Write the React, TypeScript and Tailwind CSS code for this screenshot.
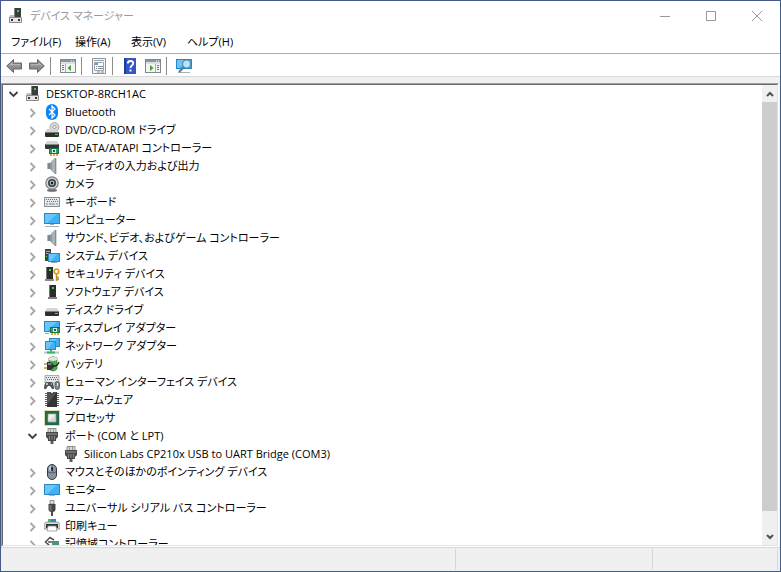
import type { ReactNode } from "react";

const Svg = ({ children, className = "h-4 w-4" }: { children: ReactNode; className?: string }) => (
  <svg viewBox="0 0 16 16" className={className + " shrink-0"} fill="none" aria-hidden="true">
    {children}
  </svg>
);

const Screen = ({ x, y, w, h }: { x: number; y: number; w: number; h: number }) => (
  <>
    <rect x={x} y={y} width={w} height={h} fill="#2f86bd" />
    <rect x={x + 1} y={y + 1} width={w - 2} height={h - 2} fill="#3fb2f5" />
    <path d={`M${x + 1} ${y + h - 1}V${y + 1}H${x + w - 3}L${x + 3} ${y + h - 1}Z`} fill="#67c6fb" />
  </>
);

const Speaker = () => (
  <Svg>
    <path d="M3 5h3v6H3z" fill="#7b868e" />
    <path d="M3 5h1v6H3z" fill="#b4bcc2" />
    <path d="M6 5l5-5v16l-5-5z" fill="#8d989f" />
    <path d="M8 3l3-3v16l-3-3z" fill="#a9b3b9" />
    <path d="M11 0h2v16h-2z" fill="#d3d8db" />
    <path d="M11.500 0v16" stroke="#6f7a81" strokeWidth=".8" />
  </Svg>
);

const Drive = ({ y = 8 }: { y?: number }) => (
  <>
    <path d={`M3 ${y - 2}h10l2 3H1z`} fill="#d5d5d5" />
    <rect x="1" y={y + 1} width="14" height="5" rx="1" fill="#2e2e2e" />
    <rect x="1" y={y + 1} width="14" height="1" fill="#7d7d7d" />
    <rect x="11" y={y + 3} width="3" height="1" fill="#4ee04e" />
  </>
);

const Plug = () => (
  <Svg>
    <path d="M4 .5h8V5H4z" fill="#d9d9d9" stroke="#777" strokeWidth=".8" />
    <path d="M6.500 1v3M9.500 1v3" stroke="#888" strokeWidth=".8" />
    <path d="M2 4h12v5l-2 2H4L2 9z" fill="#4a4a4a" />
    <path d="M3 5h10v2H3z" fill="#717171" />
    <path d="M4 11h8v2H4z" fill="#444" />
    <path d="M5.500 8v4M8 8v4M10.500 8v4" stroke="#999" strokeWidth=".8" />
    <path d="M6.500 13h3v3h-3z" fill="#5c5c5c" />
  </Svg>
);

const Chip = ({ x, y }: { x: number; y: number }) => (
  <>
    <rect x={x} y={y} width="10" height="6" fill="#17704a" />
    <rect x={x + 1} y={y + 1} width="8" height="4" fill="#2f9c68" />
    <rect x={x + 3} y={y + 1} width="4" height="4" fill="#d5e8dc" />
    <rect x={x + 4} y={y + 2} width="2" height="2" fill="#17604a" />
    <path d={`M${x + 1} ${y + 7}h8`} stroke="#e8a838" strokeWidth="2" strokeDasharray="2 1" />
  </>
);

const icons: Record<string, ReactNode> = {
  computer: (
    <Svg>
      <path d="M6 0h7v9H6z" fill="#3c3c3c" />
      <path d="M6 0h1v9H6z" fill="#858585" />
      <rect x="9" y="2" width="2" height="2" fill="#42d042" />
      <path d="M2 7h4v2h7l1 1H1z" fill="#bdbdbd" />
      <path d="M1.500 9.500h12v5h-12z" fill="#e6e6e6" stroke="#8b8b8b" />
      <path d="M3 11h2v2H3zM10 11h2v2h-2z" fill="#333" />
    </Svg>
  ),
  bluetooth: (
    <Svg>
      <rect x="2" width="12" height="16" rx="6" fill="#0a84f5" />
      <path d="M5 5l6 6-3 3V2l3 3-6 6" stroke="#fff" strokeWidth="1.200" />
    </Svg>
  ),
  dvd: (
    <Svg>
      <circle cx="10.500" cy="5" r="4.500" fill="#d9dcdc" stroke="#999" strokeWidth=".8" />
      <circle cx="10.500" cy="5" r="1.600" fill="#fff" stroke="#888" strokeWidth=".8" />
      <Drive y={9} />
    </Svg>
  ),
  ide: (
    <Svg>
      <path d="M3 1h10l2 3H1z" fill="#d5d5d5" />
      <rect x="1" y="4" width="14" height="5" rx="1" fill="#333" />
      <path d="M2 4h12v1H2z" fill="#888" />
      <Chip x={5} y={8} />
    </Svg>
  ),
  speaker: <Speaker />,
  camera: (
    <Svg>
      <ellipse cx="8" cy="14.400" rx="5" ry="1.400" fill="#6e6e6e" />
      <circle cx="8" cy="7" r="6.200" fill="#d2d5d7" stroke="#7c7f82" strokeWidth="1.200" />
      <circle cx="8" cy="7" r="4" fill="#3a4045" />
      <circle cx="8" cy="7" r="2.400" fill="#a9bac4" />
      <circle cx="8" cy="7" r="1.200" fill="#15191c" />
    </Svg>
  ),
  keyboard: (
    <Svg>
      <rect x="0.500" y="3.500" width="15" height="9" fill="#e3e7ea" stroke="#8a9299" />
      <path d="M2 5.500h12M3 7.500h11" stroke="#68717a" strokeDasharray="1 1" />
      <path d="M2 10h2M5 10h6M12 10h2" stroke="#7c858d" />
    </Svg>
  ),
  monitor: (
    <Svg>
      <Screen x={0} y={1} w={16} h={11} />
      <path d="M6 12h4v1H6z" fill="#9aa7b0" />
      <path d="M1 14.500h14" stroke="#9eb1bd" />
    </Svg>
  ),
  display: (
    <Svg>
      <Screen x={0} y={2} w={16} h={11} />
      <path d="M5 13.500h6" stroke="#a9b8c2" />
    </Svg>
  ),
  system: (
    <Svg>
      <rect x="1" y="1" width="6" height="12" fill="#3d4347" />
      <path d="M2 3.500h4M2 5.500h4" stroke="#a2aab0" />
      <rect x="2" y="8" width="1" height="1" fill="#49df49" />
      <Screen x={4} y={5} w={12} h={9} />
      <path d="M7 14.500h6" stroke="#8fa3af" />
    </Svg>
  ),
  security: (
    <Svg>
      <rect x="2" y="1" width="7" height="12" fill="#2c2c2c" />
      <path d="M2 1h1v12H2z" fill="#777" />
      <rect x="5" y="3" width="2" height="2" fill="#35e035" />
      <path d="M1 14h9" stroke="#666" strokeWidth="1.500" />
      <circle cx="12.500" cy="5.500" r="2.300" stroke="#dba12f" strokeWidth="1.800" />
      <path d="M12.500 8v7M13 11.500h2M13 13.500h2" stroke="#c98d1d" strokeWidth="1.500" />
    </Svg>
  ),
  software: (
    <Svg>
      <rect x="5" y="1" width="7" height="12" fill="#2c2c2c" />
      <path d="M5 1h1v12H5z" fill="#777" />
      <rect x="8" y="3" width="2" height="2" fill="#35e035" />
      <path d="M4 14h9" stroke="#555" strokeWidth="1.500" />
    </Svg>
  ),
  disk: (
    <Svg>
      <Drive y={8} />
    </Svg>
  ),
  adapter: (
    <Svg>
      <Screen x={0} y={1} w={16} h={11} />
      <Chip x={6} y={7} />
      <path d="M1 13.500h4" stroke="#8fa3af" />
    </Svg>
  ),
  network: (
    <Svg>
      <Screen x={5} y={0} w={11} h={9} />
      <Screen x={1} y={3} w={11} h={9} />
      <path d="M6 12h2v2H6z" fill="#3aa657" />
      <path d="M0 14.500h15" stroke="#bbc5c8" strokeWidth="2" />
      <path d="M3 14.500h8" stroke="#35b85b" strokeWidth="2" />
    </Svg>
  ),
  battery: (
    <Svg>
      <path d="M5 2q4-3 8 0v11q-4 4-8 0z" fill="#3ab83f" stroke="#51605a" strokeWidth=".7" />
      <path d="M5 2q4-3 8 0v2q-4 2-8 0z" fill="#dfe5e1" />
      <path d="M6 5q1 1 2 1v7l-2-1z" fill="#95e67c" />
      <path d="M0 8h4M0 12h4" stroke="#b89650" strokeWidth="1.300" />
      <path d="M3 6h4q3 2 3 4t-3 4H3z" fill="#333" />
      <path d="M4 7h3l1 2H4z" fill="#858585" />
      <path d="M9 10q4 1 6-4" stroke="#222" strokeWidth="1.400" />
    </Svg>
  ),
  hid: (
    <Svg>
      <path d="M1 1.500h14V9H1z" fill="#e5e8ea" stroke="#949a9e" strokeWidth=".8" />
      <path d="M2 3.500h12M3 5.500h11" stroke="#5e666c" strokeDasharray="1 1" />
      <path d="M2 8h6q2 2 2 7H8l-2-3H4l-2 3H0q0-5 2-7z" fill="#4d545b" />
      <path d="M2 10h2M3 9v2M7 10h1" stroke="#dce1e5" />
      <rect x="11" y="7.500" width="4.500" height="8" rx="2.200" fill="#82898f" stroke="#444b51" strokeWidth=".8" />
      <path d="M13.500 9v3" stroke="#e0e4e6" />
    </Svg>
  ),
  firmware: (
    <Svg>
      <path d="M1 1.500h14M1 3.500h14M1 5.500h14M1 7.500h14M1 9.500h14M1 11.500h14M1 13.500h14" stroke="#5b5b5b" />
      <rect x="3" y="0" width="10" height="15" fill="#343434" />
      <path d="M3 0h10L3 13z" fill="#515151" />
      <path d="M7 0h2v1H7z" fill="#ddd" />
    </Svg>
  ),
  cpu: (
    <Svg>
      <rect x=".5" y=".5" width="15" height="15" stroke="#c9b45e" strokeDasharray="1 1" />
      <rect x="1" y="1" width="14" height="14" fill="#226848" />
      <rect x="4" y="4" width="8" height="8" fill="#d5ddd7" stroke="#8fae9d" strokeWidth=".8" />
      <path d="M4.500 4.500h7l-7 7z" fill="#eef1ef" />
    </Svg>
  ),
  port: <Plug />,
  mouse: (
    <Svg>
      <rect x="3.500" y=".5" width="9" height="15" rx="4.500" fill="#8592a3" stroke="#353b44" />
      <path d="M5 6V5q0-3 3-4v7z" fill="#c1cad5" />
      <path d="M8 1v7M4 8q4 2 8 0" stroke="#465160" strokeWidth=".8" />
      <rect x="7" y="3" width="2" height="4" rx="1" fill="#252a31" />
    </Svg>
  ),
  usb: (
    <Svg>
      <path d="M6 .5h4V4H6z" fill="#e2e2e2" stroke="#777" strokeWidth=".8" />
      <path d="M4.500 4h7v5q0 3-3 3h-1q-3 0-3-3z" fill="#454545" />
      <path d="M5.500 5h2v6q-2 0-2-2z" fill="#777" />
      <path d="M7 12h2v4H7z" fill="#4c4c4c" />
    </Svg>
  ),
  printer: (
    <Svg>
      <path d="M4 1h8v4H4z" fill="#2487cf" />
      <path d="M4 1h3v3H4z" fill="#41c06b" />
      <path d="M2 4h12l2 2v5H0V6z" fill="#d7dadc" stroke="#777d81" strokeWidth=".7" />
      <path d="M2 6h12v4H2z" fill="#30363a" />
      <path d="M4 8h8l1 5H3z" fill="#fff" stroke="#888" strokeWidth=".7" />
    </Svg>
  ),
  storage: (
    <Svg>
      <path d="M10 4L6 1.500 1.500 6 6 10h2" stroke="#555" strokeWidth="1.500" />
      <path d="M4 6h4" stroke="#555" strokeWidth="1.500" />
      <path d="M8 5h7v4H8z" fill="#4e9278" />
    </Svg>
  ),
};

type Node = { icon: string; label: string; level: number; open?: boolean };

const nodes: Node[] = [
  { icon: "computer", label: "DESKTOP-8RCH1AC", level: 0, open: true },
  { icon: "bluetooth", label: "Bluetooth", level: 1 },
  { icon: "dvd", label: "DVD/CD-ROM ドライブ", level: 1 },
  { icon: "ide", label: "IDE ATA/ATAPI コントローラー", level: 1 },
  { icon: "speaker", label: "オーディオの入力および出力", level: 1 },
  { icon: "camera", label: "カメラ", level: 1 },
  { icon: "keyboard", label: "キーボード", level: 1 },
  { icon: "monitor", label: "コンピューター", level: 1 },
  { icon: "speaker", label: "サウンド、ビデオ、およびゲーム コントローラー", level: 1 },
  { icon: "system", label: "システム デバイス", level: 1 },
  { icon: "security", label: "セキュリティ デバイス", level: 1 },
  { icon: "software", label: "ソフトウェア デバイス", level: 1 },
  { icon: "disk", label: "ディスク ドライブ", level: 1 },
  { icon: "adapter", label: "ディスプレイ アダプター", level: 1 },
  { icon: "network", label: "ネットワーク アダプター", level: 1 },
  { icon: "battery", label: "バッテリ", level: 1 },
  { icon: "hid", label: "ヒューマン インターフェイス デバイス", level: 1 },
  { icon: "firmware", label: "ファームウェア", level: 1 },
  { icon: "cpu", label: "プロセッサ", level: 1 },
  { icon: "port", label: "ポート (COM と LPT)", level: 1, open: true },
  { icon: "port", label: "Silicon Labs CP210x USB to UART Bridge (COM3)", level: 2 },
  { icon: "mouse", label: "マウスとそのほかのポインティング デバイス", level: 1 },
  { icon: "display", label: "モニター", level: 1 },
  { icon: "usb", label: "ユニバーサル シリアル バス コントローラー", level: 1 },
  { icon: "printer", label: "印刷キュー", level: 1 },
  { icon: "storage", label: "記憶域コントローラー", level: 1 },
];

const indents = ["pl-[3px]", "pl-[22px]", "pl-[41px]"];

const Row = ({ icon, label, level, open }: Node) => (
  <li role="treeitem" aria-level={level + 1} aria-expanded={open} className={"flex h-[18px] items-center whitespace-nowrap " + indents[level]}>
    {level < 2 ? (
      <button type="button" aria-label={label} className="h-4 w-4 shrink-0">
        <Svg>
          {open ? (
            <path d="M3.500 6l4 4 4-4" stroke="#404040" strokeWidth="1.800" />
          ) : (
            <path d="M5.500 5l4 4-4 4" stroke="#a6a6a6" strokeWidth="1.800" />
          )}
        </Svg>
      </button>
    ) : (
      <span className="w-4 shrink-0" />
    )}
    <span className="ml-[3px] flex">{icons[icon]}</span>
    <span className="ml-[5px]">{label}</span>
  </li>
);

const Tool = ({ label, children }: { label: string; children: ReactNode }) => (
  <button type="button" aria-label={label} className="flex h-5 w-[23px] items-center justify-center">
    {children}
  </button>
);

const Sep = () => <span className="mr-[5px] ml-[2px] h-[18px] w-px bg-[#8c8c8c]" />;

const Arrow = () => (
  <>
    <path d="M7.500 1.500v3.500h8v6h-8v3.500L.7 8z" fill="#8c8c8c" stroke="#666" />
    <path d="M6.500 4v2h8v1.500H2.500z" fill="#b0b0b0" />
  </>
);

const Panel = ({ flip }: { flip?: boolean }) => (
  <Svg>
    <rect x=".5" y="1.500" width="15" height="13" fill="#f4f4f4" stroke="#808892" />
    <path d="M1 2h14v2H1z" fill="#8b96a3" />
    <path d="M1 5h14" stroke="#c3cad1" />
    <path d="M11 3h3" stroke="#fff" strokeDasharray="1 1" />
    <g transform={flip ? "matrix(-1 0 0 1 16 0)" : undefined}>
      <path d="M2 7.500h2M2 9.500h2M2 11.500h2" stroke="#6a7480" />
      <path d="M5.500 6v8" stroke="#a5adb6" />
      <path d="M11 7v6L7.500 10z" fill="#3fa62a" />
    </g>
  </Svg>
);

const menus = [
  { label: "ファイル(F)", width: "w-16" },
  { label: "操作(A)", width: "w-14" },
  { label: "表示(V)", width: "w-14" },
  { label: "ヘルプ(H)", width: "w-16" },
];

export default function App() {
  return (
    <div className="flex h-screen cursor-default flex-col overflow-hidden border border-[#465a8c] bg-[#f0f0f0] font-['Open_Sans','Noto_Sans_CJK_JP',sans-serif] text-[11px] leading-[18px] text-black [font-feature-settings:'palt']">
      <header className="flex h-[30px] shrink-0 items-center bg-white">
        <span className="ml-[7px]">{icons.computer}</span>
        <h1 className="ml-[6px] flex-1 text-[#999]">デバイス マネージャー</h1>
        <button type="button" aria-label="最小化" className="flex h-full w-[46px] items-center justify-center">
          <svg viewBox="0 0 10 10" className="h-[10px] w-[10px]" stroke="#999"><path d="M0 5.500h10" /></svg>
        </button>
        <button type="button" aria-label="最大化" className="flex h-full w-[46px] items-center justify-center">
          <svg viewBox="0 0 10 10" className="h-[10px] w-[10px]" fill="none" stroke="#999"><path d="M.5.5h9v9h-9z" /></svg>
        </button>
        <button type="button" aria-label="閉じる" className="flex h-full w-[46px] items-center justify-center">
          <svg viewBox="0 0 10 10" className="h-[10px] w-[10px]" stroke="#999"><path d="M0 0l10 10M10 0L0 10" /></svg>
        </button>
      </header>

      <nav className="flex h-[22px] shrink-0 items-center bg-white pl-[2px]">
        {menus.map((m) => (
          <button key={m.label} type="button" className={"pl-2 text-left whitespace-nowrap " + m.width}>
            {m.label}
          </button>
        ))}
      </nav>

      <div className="flex h-6 shrink-0 items-center border-y border-t-[#a9adb8] border-b-[#d9d9d9] bg-white pt-[2px] pl-px">
        <Tool label="戻る"><Svg><Arrow /></Svg></Tool>
        <Tool label="進む"><Svg><g transform="matrix(-1 0 0 1 16 0)"><Arrow /></g></Svg></Tool>
        <Sep />
        <Tool label="コンソール ツリーの表示"><Panel /></Tool>
        <Sep />
        <Tool label="プロパティ">
          <Svg>
            <path d="M1.500.5h13v15h-13z" fill="#f7f7f7" stroke="#8e949b" />
            <path d="M3.500 4.500h9v8h-9z" fill="#fff" stroke="#9ba6b2" />
            <path d="M3 2.500h10" stroke="#9aa3ad" />
            <path d="M4 5h3v2H4z" fill="#8996a5" />
            <path d="M5 8.500h1M7 8.500h5M5 10.500h1M7 10.500h5" stroke="#7b8794" />
            <path d="M6 14h3M10 14h3" stroke="#7b8794" />
          </Svg>
        </Tool>
        <Sep />
        <Tool label="ヘルプ">
          <Svg>
            <path d="M2 0h12v16H2z" fill="#3556c5" />
            <path d="M2 0h2v16H2z" fill="#233c9b" />
            <path d="M5.800 5.500q0-2.500 2.700-2.500t2.700 2.300q0 1.400-1.400 2.300T8.500 10" stroke="#fff" strokeWidth="1.800" />
            <path d="M7.500 11.500h2v2h-2z" fill="#fff" />
          </Svg>
        </Tool>
        <Tool label="操作ウィンドウの表示"><Panel flip /></Tool>
        <Sep />
        <Tool label="ハードウェア変更のスキャン">
          <Svg>
            <Screen x={0} y={1} w={16} h={10} />
            <path d="M2 14.500h12" stroke="#9fb4c0" />
            <path d="M8 9l-5 5" stroke="#54788f" strokeWidth="2" />
            <circle cx="10.500" cy="6" r="4" fill="#b9e5fb" stroke="#5d87a2" strokeWidth="1.200" />
          </Svg>
        </Tool>
      </div>

      <main className="mt-[6px] mr-px flex min-h-0 flex-1 border border-t-[#a0a0a0] border-r-white border-b-white border-l-[#a0a0a0]">
        <div className="flex min-w-0 flex-1 border border-t-[#696969] border-r-[#e3e3e3] border-b-[#e3e3e3] border-l-[#696969] bg-white">
          <ul role="tree" aria-label="デバイス" className="min-w-0 flex-1 overflow-hidden">
            {nodes.map((n, i) => (
              <Row key={i} {...n} />
            ))}
          </ul>
          <div className="flex w-[15px] flex-col bg-[#f0f0f0]">
            <button type="button" aria-label="上へスクロール" className="flex h-[17px] items-center justify-center">
              <svg viewBox="0 0 8 8" className="h-2 w-2" fill="none"><path d="M1 6l3-3 3 3" stroke="#505050" strokeWidth="2" /></svg>
            </button>
            <div className="flex min-h-0 flex-1 flex-col">
              <div className="h-[96%] bg-[#cdcdcd]" />
            </div>
            <button type="button" aria-label="下へスクロール" className="flex h-[17px] items-center justify-center">
              <svg viewBox="0 0 8 8" className="h-2 w-2" fill="none"><path d="M1 2l3 3 3-3" stroke="#505050" strokeWidth="2" /></svg>
            </button>
          </div>
        </div>
      </main>

      <footer className="flex h-6 shrink-0 border-t border-[#d7d7d7] py-px pr-[2px]">
        <div className="flex-1 border-r border-[#d7d7d7]" />
        <div className="w-[197px] border-r border-[#d7d7d7]" />
        <div className="w-[125px] border-r border-[#d7d7d7]" />
      </footer>
    </div>
  );
}
